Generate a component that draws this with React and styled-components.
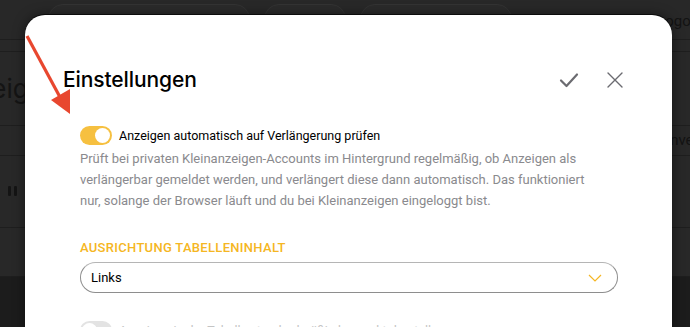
import styled, { createGlobalStyle } from "styled-components";

const Global = createGlobalStyle`
  html, body {
    margin: 0;
    padding: 0;
    background: #282828;
    overflow: hidden;
  }
  body {
    font-family: Roboto, "Liberation Sans", sans-serif;
  }
`;

const Screen = styled.div`
  position: relative;
  width: 690px;
  height: 327px;
  overflow: hidden;
  background: #282828;
`;

/* dimmed page behind the dialog */
const Backdrop = styled.div`
  display: flex;
  flex-direction: column;
  height: 100%;
  color: #141414;
`;

const Row = styled.div`
  display: flex;
  align-items: center;
  justify-content: space-between;
  height: ${(p) => p.h}px;
  border-bottom: 1px solid ${(p) => (p.noline ? "transparent" : "#1e1e1e")};
  background: ${(p) => p.bg || "transparent"};
  padding: 0 0 0 8px;
  box-sizing: border-box;
`;

const TopPills = styled.div`
  display: flex;
  gap: 14px;
  align-self: flex-start;
  margin-top: 4px;
  margin-left: 40px;
`;

const Pill = styled.div`
  width: ${(p) => p.w}px;
  height: 30px;
  border: 1px solid #333;
  border-radius: 15px;
  background: #2b2b2b;
`;

const BgTitle = styled.span`
  font-family: Inter, sans-serif;
  font-size: 26px;
  margin-left: -64px;
`;

const BgText = styled.span`
  font-size: 15px;
  color: #131313;
  margin-right: ${(p) => p.mr || 0}px;
`;

const Pause = styled.div`
  display: flex;
  gap: 3px;
  span {
    width: 3px;
    height: 10px;
    background: #141414;
    border-radius: 1px;
  }
`;

const Dialog = styled.div`
  position: absolute;
  left: 25px;
  top: 15px;
  width: 647px;
  height: 400px;
  background: #fff;
  border-radius: 20px 20px 0 0;
  box-shadow: 0 -1px 0 #0c0c0c, 0 0 12px rgba(0, 0, 0, 0.5);
  display: flex;
  flex-direction: column;
`;

const Header = styled.div`
  display: flex;
  align-items: center;
  justify-content: space-between;
  padding: 52px 48px 0 38px;
`;

const Title = styled.h2`
  margin: 0;
  font-family: Inter, sans-serif;
  font-size: 21px;
  font-weight: 500;
  color: #000;
  letter-spacing: -0.1px;
`;

const Actions = styled.div`
  display: flex;
  align-items: center;
  gap: 26px;
`;

const IconButton = styled.button`
  border: 0;
  background: none;
  padding: 0;
  display: flex;
  cursor: pointer;
`;

const Body = styled.div`
  display: flex;
  flex-direction: column;
  padding: 34px 54px 0 55px;
`;

const ToggleRow = styled.label`
  display: flex;
  align-items: center;
  gap: 7px;
  font-size: 12.5px;
  color: ${(p) => (p.disabled ? "#c4c4c4" : "#000")};
`;

const Switch = styled.span`
  width: 32px;
  height: 19px;
  border-radius: 10px;
  background: ${(p) => (p.on ? "#f6c040" : "#e3e3e3")};
  display: flex;
  align-items: center;
  justify-content: ${(p) => (p.on ? "flex-end" : "flex-start")};
  padding: 2px;
  box-sizing: border-box;
  flex-shrink: 0;
  &::after {
    content: "";
    width: 15px;
    height: 15px;
    border-radius: 50%;
    background: #fff;
  }
`;

const Hint = styled.p`
  margin: 3px 0 0;
  max-width: 524px;
  font-size: 13px;
  line-height: 21px;
  color: #8a8a8e;
`;

const SectionLabel = styled.div`
  margin-top: 29px;
  font-size: 13px;
  font-weight: 500;
  color: #f5b623;
  letter-spacing: 0.3px;
`;

const Select = styled.div`
  margin-top: 7px;
  height: 31px;
  border: 1px solid #8e8e8e;
  border-top-color: #b5b5b5;
  border-radius: 16px;
  display: flex;
  align-items: center;
  justify-content: space-between;
  padding: 0 15px 0 10px;
  font-size: 13px;
  color: #000;
  box-sizing: border-box;
`;

const Spacer = styled.div`
  height: ${(p) => p.h}px;
`;

const Arrow = styled.svg`
  position: absolute;
  left: 0;
  top: 0;
`;

export default function App() {
  return (
    <Screen>
      <Global />
      <Backdrop>
        <Row h={40}>
          <TopPills>
            <Pill w={200} />
            <Pill w={80} />
            <Pill w={150} />
          </TopPills>
          <BgText mr={-14} style={{ marginTop: 4 }}>Logout</BgText>
        </Row>
        <Row h={12} />
        <Row h={75}>
          <BgTitle>Anzeigen</BgTitle>
        </Row>
        <Row h={30}>
          <span />
          <BgText mr={-30}>Inventar</BgText>
        </Row>
        <Row h={73}>
          <Pause>
            <span />
            <span />
          </Pause>
        </Row>
        <Row h={50} />
        <Row h={50} bg="#1c1c1c" noline />
      </Backdrop>

      <Dialog>
        <Header>
          <Title>Einstellungen</Title>
          <Actions>
            <IconButton aria-label="Speichern">
              <svg width="22" height="22" viewBox="0 0 22 22" fill="none">
                <path
                  d="M3 11.5l5.5 5.5L19 5.5"
                  stroke="#6b6b70"
                  strokeWidth="2.2"
                  strokeLinecap="round"
                  strokeLinejoin="round"
                />
              </svg>
            </IconButton>
            <IconButton aria-label="Schließen">
              <svg width="18" height="18" viewBox="0 0 18 18" fill="none">
                <path
                  d="M2 2l14 14M16 2L2 16"
                  stroke="#6b6b70"
                  strokeWidth="1.4"
                  strokeLinecap="round"
                />
              </svg>
            </IconButton>
          </Actions>
        </Header>

        <Body>
          <ToggleRow>
            <Switch on />
            Anzeigen automatisch auf Verlängerung prüfen
          </ToggleRow>
          <Hint>
            Prüft bei privaten Kleinanzeigen-Accounts im Hintergrund regelmäßig, ob
            Anzeigen als verlängerbar gemeldet werden, und verlängert diese dann
            automatisch. Das funktioniert nur, solange der Browser läuft und du bei
            Kleinanzeigen eingeloggt bist.
          </Hint>

          <SectionLabel>AUSRICHTUNG TABELLENINHALT</SectionLabel>
          <Select>
            Links
            <svg width="14" height="8" viewBox="0 0 14 8" fill="none">
              <path d="M1 1l6 6 6-6" stroke="#f5b623" strokeWidth="1.2" />
            </svg>
          </Select>

          <Spacer h={28} />
          <ToggleRow disabled>
            <Switch />
            Anzeigen in der Tabelle standardmäßig kompakt darstellen
          </ToggleRow>
        </Body>
      </Dialog>

      <Arrow width="80" height="120" viewBox="0 0 80 120">
        <line x1="27" y1="36" x2="61" y2="99" stroke="#e8472f" strokeWidth="3.2" />
        <polygon points="51,100 70,89 70,114" fill="#e8472f" />
      </Arrow>
    </Screen>
  );
}
